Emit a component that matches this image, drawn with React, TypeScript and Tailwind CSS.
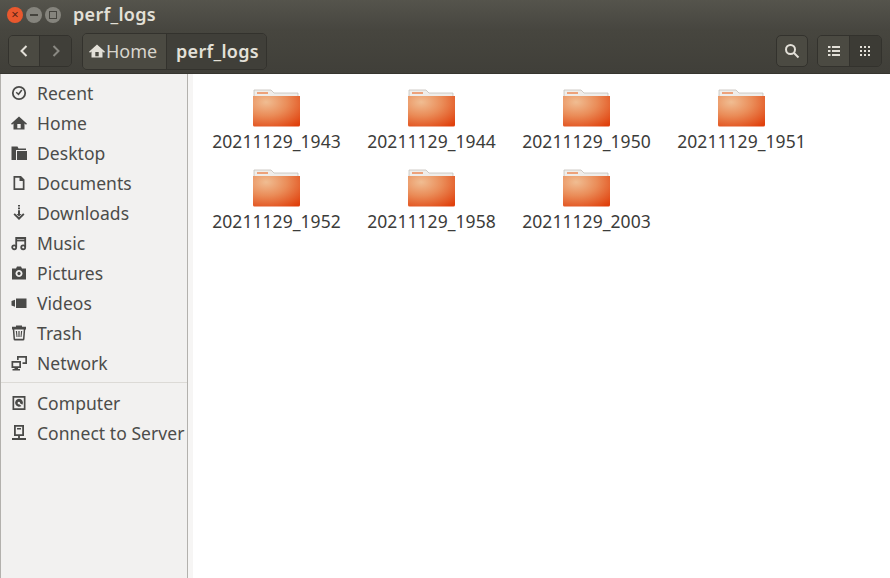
import { ReactNode } from "react";

function Icon({ children }: { children: ReactNode }) {
  return (
    <svg viewBox="0 0 16 16" className="h-4 w-4 shrink-0" fill="#4a4a48">
      {children}
    </svg>
  );
}

const homePath = "M8 1.500 0 8.700l1 1.100L2.500 8.500V14.500h11V8.500l1.500 1.300 1-1.100zM6.300 9h3.400v4.300H6.300z";

const places: { name: string; icon: ReactNode }[] = [
  {
    name: "Recent",
    icon: (
      <>
        <circle cx="8" cy="8" r="6.200" fill="none" stroke="#4a4a48" strokeWidth="1.800" />
        <path d="M5.200 7.300 7.500 9.300 10.800 5" fill="none" stroke="#4a4a48" strokeWidth="1.500" />
      </>
    ),
  },
  {
    name: "Home",
    icon: <path fillRule="evenodd" d={homePath} />,
  },
  {
    name: "Desktop",
    icon: <path d="M.5 1.500h6L7.500 3.500H15V5H5V15H.5zM6 6h10v9H6z" />,
  },
  {
    name: "Documents",
    icon: <path fillRule="evenodd" d="M2.500 1h7.500L13.500 4.500V15h-11zM4.200 2.700v10.600h7.600V6H8.500V2.700z" />,
  },
  {
    name: "Downloads",
    icon: (
      <>
        <path d="M7 0h2v1.600H7zM7 2.600h2v1.600H7zM7 5.200h2V9h1.500L8 11.500 5.500 9H7z" />
        <path d="M2.500 9.500 3.800 8.200 8 12.300l4.200-4.100 1.300 1.300L8 15z" />
      </>
    ),
  },
  {
    name: "Music",
    icon: (
      <>
        <path d="M5.200 12V3h9v9" fill="none" stroke="#4a4a48" strokeWidth="1.800" />
        <path d="M5.200 5.500h9" fill="none" stroke="#4a4a48" strokeWidth="1.800" />
        <circle cx="3.200" cy="12.300" r="2" fill="none" stroke="#4a4a48" strokeWidth="1.800" />
        <circle cx="12.200" cy="12.300" r="2" fill="none" stroke="#4a4a48" strokeWidth="1.800" />
      </>
    ),
  },
  {
    name: "Pictures",
    icon: (
      <path
        fillRule="evenodd"
        d="M1 3.500h4L6 1.500h4l1 2h4V14.500H1zM8 5a3.500 3.500 0 1 0 .01 0zM8 6.800a1.700 1.700 0 1 1-.01 0z"
      />
    ),
  },
  {
    name: "Videos",
    icon: <path d="M5 3.500h10.500v9.500H5zM.5 6 4 4.800v6.900L.5 10.500z" />,
  },
  {
    name: "Trash",
    icon: (
      <path
        fillRule="evenodd"
        d="M5 .5h6v1.200h4V4.500h-.8L13.500 14a1.500 1.500 0 0 1-1.500 1.500H4A1.500 1.500 0 0 1 2.500 14L1.800 4.500H1V1.700h4zM3.300 4.500l.7 9.300h8l.7-9.300zM4.800 6h1.200l.5 6h-1zM7.400 6h1.200v6H7.400zM10 6h1.200l-.7 6h-1z"
      />
    ),
  },
  {
    name: "Network",
    icon: (
      <path
        fillRule="evenodd"
        d="M.5 6H10v7H7v1h2v1.500H1.500V14h2v-1H.5zM2.200 7.700V11.300h6.100V7.700zM6 1h10V9H11.500V7.300h2.800V2.700H7.700V5H6z"
      />
    ),
  },
];

const devices: { name: string; icon: ReactNode }[] = [
  {
    name: "Computer",
    icon: (
      <path
        fillRule="evenodd"
        d="M1.500 1h13v14h-13zM3.200 2.700v10.600h9.600V2.700zM8 3.800a4 4 0 0 1 3.400 6L9 8.200A1.200 1.200 0 1 0 8.200 9.200L10.500 11A4 4 0 1 1 8 3.800z"
      />
    ),
  },
  {
    name: "Connect to Server",
    icon: (
      <path
        fillRule="evenodd"
        d="M3 0h10v11H8.900v2H15v2H1v-2h6.100v-2H3zM4.800 1.700v7.600h6.400V1.700zM6 3h4v1.600H6z"
      />
    ),
  },
];

const folders = [
  "20211129_1943",
  "20211129_1944",
  "20211129_1950",
  "20211129_1951",
  "20211129_1952",
  "20211129_1958",
  "20211129_2003",
];

function SidebarRow({ name, icon }: { name: string; icon: ReactNode }) {
  return (
    <div className="flex h-[30px] items-center gap-[10px] pl-[10px]">
      {icon}
      <span className="whitespace-nowrap pt-[1px] text-[17.5px] tracking-[0.05px] text-[#4c4c4a]">{name}</span>
    </div>
  );
}

function FolderIcon() {
  return (
    <svg viewBox="0 0 48 40" className="h-[40px] w-[48px]">
      <defs>
        <radialGradient id="folderFill" cx="0.28" cy="0.2" r="1">
          <stop offset="0" stopColor="#f0bd92" />
          <stop offset="0.45" stopColor="#ea8c58" />
          <stop offset="1" stopColor="#e0400c" />
        </radialGradient>
      </defs>
      <path d="M1 2h17l3 3h24v6H1z" fill="#efedea" stroke="#c4c0ba" strokeWidth="0.8" />
      <path d="M4 4h11v2H4z" fill="#eda27a" />
      <path d="M0 8h47v29a1.500 1.500 0 0 1-1.500 1.500h-44A1.500 1.500 0 0 1 0 37z" fill="url(#folderFill)" />
    </svg>
  );
}

export default function App() {
  return (
    <div className="flex h-[578px] w-[890px] flex-col overflow-hidden bg-white font-['Noto_Sans',sans-serif]">
      {/* title bar */}
      <div className="flex h-[29px] items-center bg-linear-to-b from-[#55544c] to-[#474640] pl-[7px]">
        <div className="flex items-center gap-[3px]">
          <div className="flex h-[16px] w-[16px] items-center justify-center rounded-full bg-[#e9582e] text-[13px] leading-none text-[#5a2415]">
            ×
          </div>
          <div className="flex h-[16px] w-[16px] items-center justify-center rounded-full bg-[#85847d]">
            <div className="h-[2px] w-[8px] bg-[#45443e]" />
          </div>
          <div className="flex h-[16px] w-[16px] items-center justify-center rounded-full bg-[#85847d]">
            <div className="h-[8px] w-[8px] border border-[#45443e]" />
          </div>
        </div>
        <span className="ml-[12px] text-[18px] font-semibold tracking-[0.3px] text-[#e3e0d8]">perf_logs</span>
      </div>

      {/* toolbar */}
      <div className="flex h-[45px] items-center border-b border-[#36352f] bg-linear-to-b from-[#47463f] to-[#403f39] px-[8px]">
        <div className="flex h-[32px] w-[64px] overflow-hidden rounded-[5px] border border-[#33322d]">
          <div className="flex w-[32px] items-center justify-center border-r border-[#33322d] bg-[#4b4a42]">
            <svg viewBox="0 0 16 16" className="h-4 w-4" fill="none" stroke="#e3e0d8" strokeWidth="2">
              <path d="M10.500 3 5.500 8l5 5" />
            </svg>
          </div>
          <div className="flex w-[32px] items-center justify-center bg-[#403f39]">
            <svg viewBox="0 0 16 16" className="h-4 w-4" fill="none" stroke="#8a8983" strokeWidth="2">
              <path d="M5.500 3l5 5-5 5" />
            </svg>
          </div>
        </div>

        <div className="ml-[10px] flex h-[37px] overflow-hidden rounded-[5px] border border-[#33322d]">
          <div className="flex w-[84px] items-center gap-[1px] border-r border-[#33322d] bg-[#4b4a42] pl-[6px]">
            <svg viewBox="0 0 16 16" className="h-4 w-4 shrink-0" fill="#e3e0d8">
              <path fillRule="evenodd" d={homePath} />
            </svg>
            <span className="text-[18px] text-[#d8d5cd]">Home</span>
          </div>
          <div className="flex items-center bg-[#403f39] pl-[9px] pr-[7px] text-[18px] font-semibold tracking-[0.3px] text-[#e3e0d8]">
            perf_logs
          </div>
        </div>

        <div className="ml-auto flex h-[32px] w-[32px] items-center justify-center rounded-[5px] border border-[#33322d] bg-[#4b4a42]">
          <svg viewBox="0 0 16 16" className="h-4 w-4" fill="none" stroke="#e3e0d8" strokeWidth="2">
            <circle cx="6.500" cy="6.500" r="4.500" />
            <path d="M10 10l4.500 4.500" />
          </svg>
        </div>

        <div className="ml-[9px] flex h-[32px] w-[65px] overflow-hidden rounded-[5px] border border-[#33322d]">
          <div className="flex w-[32px] items-center justify-center border-r border-[#33322d] bg-[#4b4a42]">
            <svg viewBox="0 0 12 12" className="h-3 w-3" fill="#e3e0d8">
              <path d="M0 1h2.500v2H0zM4 1h8v2H4zM0 5h2.500v2H0zM4 5h8v2H4zM0 9h2.500v2H0zM4 9h8v2H4z" />
            </svg>
          </div>
          <div className="flex flex-1 items-center justify-center bg-[#3c3b35]">
            <svg viewBox="0 0 11 11" className="h-[11px] w-[11px]" fill="#e3e0d8">
              <path d="M0 0h2v2H0zM4 0h2v2H4zM8 0h2v2H8zM0 4h2v2H0zM4 4h2v2H4zM8 4h2v2H8zM0 8h2v2H0zM4 8h2v2H4zM8 8h2v2H8z" />
            </svg>
          </div>
        </div>
      </div>

      <div className="flex min-h-0 flex-1">
        {/* sidebar */}
        <div className="w-[188px] shrink-0 border-x border-[#b3b1ad] bg-[#f2f1f0] pt-[4px]">
          {places.map((p) => (
            <SidebarRow key={p.name} name={p.name} icon={<Icon>{p.icon}</Icon>} />
          ))}
          <div className="mb-[5px] mt-[4px] h-[1px] bg-[#dcdad6]" />
          {devices.map((p) => (
            <SidebarRow key={p.name} name={p.name} icon={<Icon>{p.icon}</Icon>} />
          ))}
        </div>

        {/* file grid */}
        <div className="flex-1 border-l-[5px] border-[#f6f5f4] bg-white pl-[19px] pt-[14px]">
          <div className="grid grid-cols-[repeat(4,155px)] gap-y-[5px]">
            {folders.map((f) => (
              <div key={f} className="flex h-[75px] w-[129px] flex-col items-center">
                <FolderIcon />
                <span className="pt-[1px] text-[17.5px] leading-[24px] tracking-[0.05px] text-[#3c3c3a]">{f}</span>
              </div>
            ))}
          </div>
        </div>
      </div>
    </div>
  );
}
